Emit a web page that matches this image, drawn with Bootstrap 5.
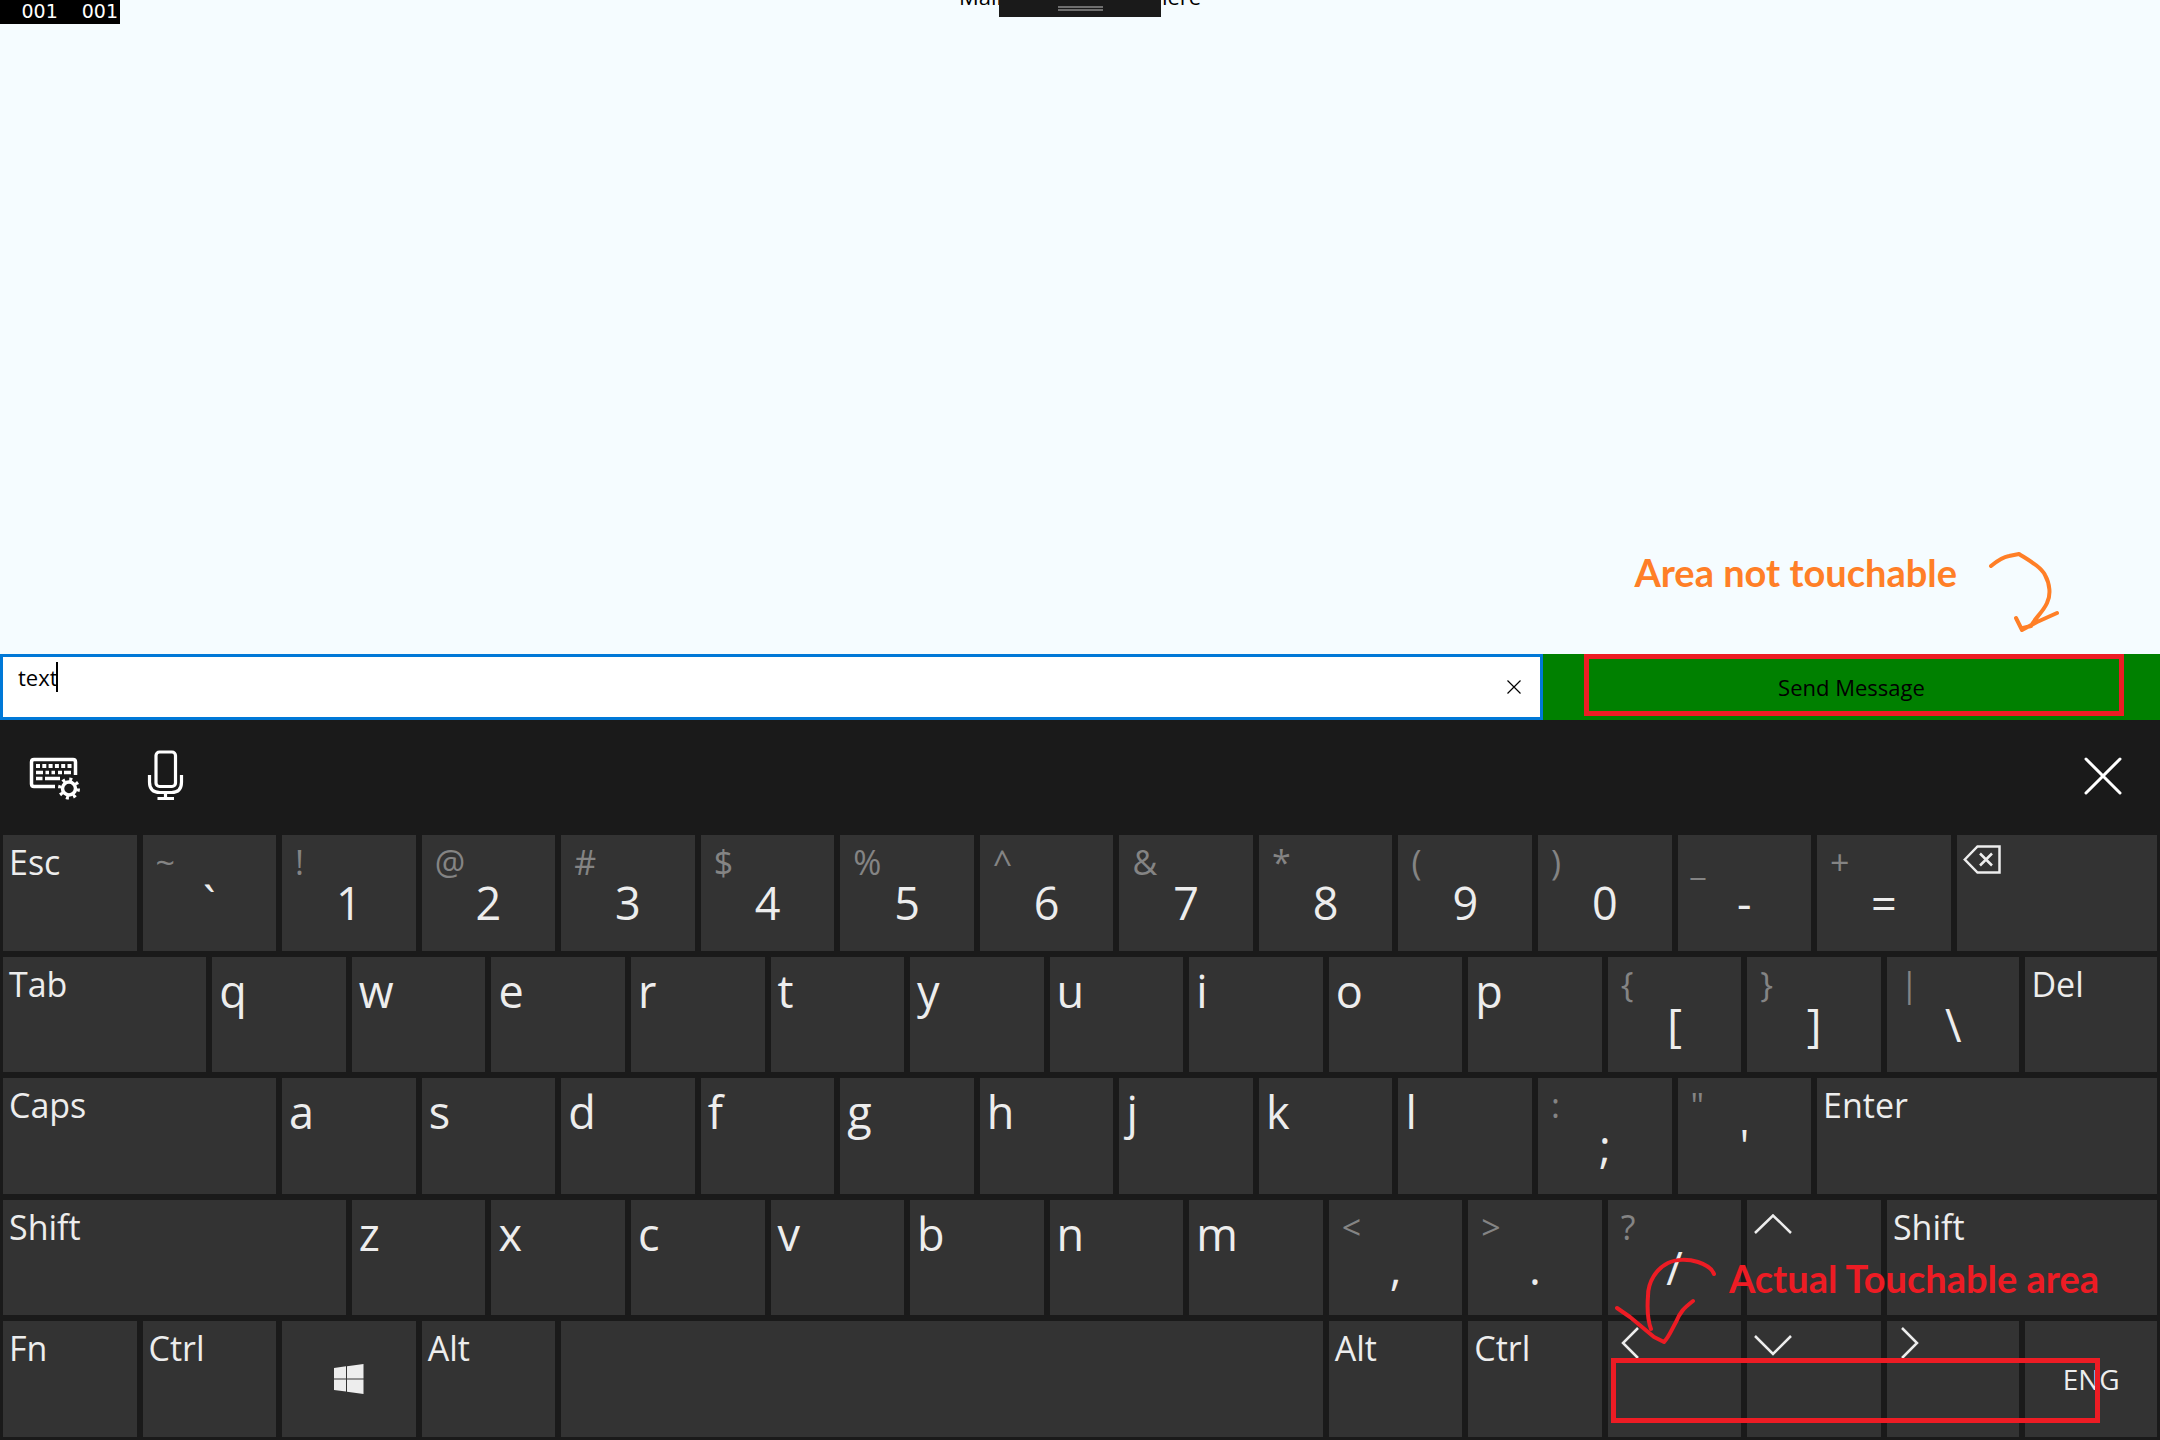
<!DOCTYPE html>
<html lang="en">
<head>
<meta charset="utf-8">
<meta name="viewport" content="width=device-width, initial-scale=1">
<title>Send Message</title>
<link href="https://cdn.jsdelivr.net/npm/bootstrap@5.3.0/dist/css/bootstrap.min.css" rel="stylesheet">
<style>
  body { background: #f5fcff; color: #000; font-family: "Open Sans", "Noto Sans", sans-serif; font-size: 22px; line-height: 30px; }
  svg { display: block; fill: none; }
  .bare-btn { border: 0; padding: 0; background: transparent; color: inherit; }
  .app-pane { height: 50vh; }
  .frame-stats { width: 120px; height: 24px; padding: 0 2px 2px 0; background: #000; color: #fff; font: 19px/22px "DejaVu Sans", sans-serif; }
  .page-heading { margin-top: -19px; }
  .snap-handle { width: 162px; height: 17px; padding-top: 6px; gap: 1px; background: #1a1a1a; }
  .snap-handle i { width: 45px; height: 2px; background: #6e6e6e; }

  .note-text { font: 700 38px/40px Lato, sans-serif; white-space: nowrap; }
  .note-orange { color: #ff7f27; }
  .note-red { color: #ed1c24; }
  .note-row { gap: 30px; padding: 0 98px 22px 0; }
  .note-box { border: 5px solid #ed1c24; pointer-events: none; }

  .composer { height: 66px; }
  .message-cell { flex: 5 1 0; }
  .send-cell { flex: 2 1 0; }
  .message-input { border: 3px solid #0078d7; padding: 4px 60px 24px 15px; background: #fff; color: #000; outline: 0; }
  .text-caret { left: 56px; top: 8px; width: 2px; height: 30px; background: #000; }
  .clear-btn { right: 22px; top: 26px; }
  .send-btn { background: #008000; color: #000; }
  .send-box { inset: 0 36px 4px 41px; }

  .touch-keyboard { height: 50vh; background: #1a1a1a; color: #ededed; }
  .kb-tools { flex: 0 0 115px; padding: 0 38px 3px 29px; }
  .kb-keys { display: grid; gap: 6px; padding: 0 3px 3px; grid-template-columns: repeat(28, minmax(0, 64fr)) repeat(3, minmax(0, 63fr)); grid-template-rows: repeat(5, minmax(0, 1fr)); }
  .kb-key { grid-column: span 2; display: flex; flex-direction: column; align-items: flex-start; justify-content: flex-start; min-width: 0; padding: 0 6px; border: 0; background: #333; color: #ededed; font-size: 34px; line-height: 54px; }
  .kb-key.letter { padding: 0 7px; font-size: 45px; line-height: 68px; }
  .kb-key .alt-char { padding-left: 7px; color: #848484; }
  .kb-key .main-char { align-self: center; font-size: 45px; line-height: 28px; }
  .kb-key.centered { align-items: center; justify-content: center; font-size: 28px; }
  .span-3 { grid-column: span 3; }
  .span-4 { grid-column: span 4; }
  .span-5 { grid-column: span 5; }
  .span-11 { grid-column: span 11; }
  .glyph-back { padding-top: 10px; }
  .glyph-v { padding: 14px 7px 0; }
  .glyph-h { padding: 6px 0 0 8px; }

  .touch-box { right: 60px; bottom: 17px; width: 489px; height: 65px; }
  .touch-arrow { right: 442px; bottom: 94px; pointer-events: none; }
  .touch-note { right: 61px; bottom: 142px; pointer-events: none; }
</style>
<script src="https://cdn.jsdelivr.net/npm/bootstrap@5.3.0/dist/js/bootstrap.bundle.min.js"></script>
</head>
<body>

<main class="app-pane d-flex flex-column position-relative overflow-hidden">
  <div class="frame-stats position-absolute top-0 start-0 d-flex justify-content-end gap-4"><span>001</span><span>001</span></div>
  <div class="page-heading text-center">Main content goes here</div>
  <div class="snap-handle position-absolute top-0 start-50 translate-middle-x d-flex flex-column align-items-center"><i></i><i></i></div>

  <div class="note-row mt-auto d-flex justify-content-end align-items-start">
    <span class="note-text note-orange">Area not touchable</span>
    <svg width="75" height="80" viewBox="0 0 75 80" stroke="#ff7f27" stroke-width="4" stroke-linecap="round" stroke-linejoin="round" aria-hidden="true">
      <path d="M4 14C10 9 16 5 22 4L32 2C43 9 54 15 58 23C63 32 64 43 60 51C56 60 48 66 44 74L36 76M29 66L35 78L50 70L70 61"/>
    </svg>
  </div>

  <form class="composer d-flex flex-shrink-0" onsubmit="return false">
    <div class="message-cell position-relative">
      <input class="message-input w-100 h-100 d-block" type="text" value="text" aria-label="Message">
      <span class="text-caret position-absolute"></span>
      <button class="bare-btn clear-btn position-absolute text-black" type="button" aria-label="Clear text">
        <svg width="14" height="14" viewBox="0 0 14 14" stroke="currentColor" stroke-width="1.2"><path d="M.5 .5L13.5 13.5M13.5 .5L.5 13.5"/></svg>
      </button>
    </div>
    <div class="send-cell position-relative">
      <button class="bare-btn send-btn w-100 h-100" type="submit">Send Message</button>
      <div class="note-box send-box position-absolute"></div>
    </div>
  </form>
</main>

<section class="touch-keyboard d-flex flex-column position-relative" aria-label="Touch keyboard">
  <div class="kb-tools d-flex align-items-center">
    <button class="bare-btn text-white" type="button" aria-label="Keyboard settings">
      <svg width="52" height="52" viewBox="0 0 52 52" stroke="currentColor">
        <path d="M26 36.500H5Q2.500 36.500 2.500 34V12Q2.500 9.500 5 9.500H44Q46.500 9.500 46.500 12V25" stroke-width="3.500"/>
        <path d="M7 16H43" stroke-width="4" stroke-dasharray="4 2.300"/>
        <path d="M7 22.500H14M16.500 22.500H20M22.500 22.500H26M29 22.500H33M35 22.500H42M7 28.500H13.500M16 28.500H31" stroke-width="3.500"/>
        <circle cx="40" cy="38.500" r="6.500" stroke-width="3.500"/>
        <circle cx="40" cy="38.500" r="9.300" stroke-width="3.400" stroke-dasharray="3 4.304"/>
      </svg>
    </button>
    <button class="bare-btn text-white ms-5" type="button" aria-label="Dictate">
      <svg width="76" height="52" viewBox="0 0 76 52" stroke="currentColor" stroke-width="3.200">
        <rect x="27" y="2" width="19.500" height="34.500" rx="3.500"/>
        <path d="M20.500 25V32Q20.500 42.500 31 42.500H42.500Q52.500 42.500 52.500 32V25M36.500 42.500V48M28.500 48.500H45"/>
      </svg>
    </button>
    <button class="bare-btn text-white ms-auto" type="button" aria-label="Close keyboard">
      <svg width="38" height="38" viewBox="0 0 38 38" stroke="currentColor" stroke-width="3" stroke-linecap="round"><path d="M2 2L36 36M36 2L2 36"/></svg>
    </button>
  </div>

  <div class="kb-keys flex-fill">
    <button class="kb-key" type="button">Esc</button>
    <button class="kb-key" type="button"><span class="alt-char">~</span><span class="main-char">`</span></button>
    <button class="kb-key" type="button"><span class="alt-char">!</span><span class="main-char">1</span></button>
    <button class="kb-key" type="button"><span class="alt-char">@</span><span class="main-char">2</span></button>
    <button class="kb-key" type="button"><span class="alt-char">#</span><span class="main-char">3</span></button>
    <button class="kb-key" type="button"><span class="alt-char">$</span><span class="main-char">4</span></button>
    <button class="kb-key" type="button"><span class="alt-char">%</span><span class="main-char">5</span></button>
    <button class="kb-key" type="button"><span class="alt-char">^</span><span class="main-char">6</span></button>
    <button class="kb-key" type="button"><span class="alt-char">&amp;</span><span class="main-char">7</span></button>
    <button class="kb-key" type="button"><span class="alt-char">*</span><span class="main-char">8</span></button>
    <button class="kb-key" type="button"><span class="alt-char">(</span><span class="main-char">9</span></button>
    <button class="kb-key" type="button"><span class="alt-char">)</span><span class="main-char">0</span></button>
    <button class="kb-key" type="button"><span class="alt-char">_</span><span class="main-char">-</span></button>
    <button class="kb-key" type="button"><span class="alt-char">+</span><span class="main-char">=</span></button>
    <button class="kb-key span-3 glyph-back" type="button" aria-label="Backspace">
      <svg width="38" height="29" viewBox="0 0 38 29" stroke="currentColor" stroke-width="2.500"><path d="M1.800 14.500L14.500 1.500H36.500V27.500H14.500ZM17 8.500L29 20.500M29 8.500L17 20.500"/></svg>
    </button>

    <button class="kb-key span-3" type="button">Tab</button>
    <button class="kb-key letter" type="button">q</button>
    <button class="kb-key letter" type="button">w</button>
    <button class="kb-key letter" type="button">e</button>
    <button class="kb-key letter" type="button">r</button>
    <button class="kb-key letter" type="button">t</button>
    <button class="kb-key letter" type="button">y</button>
    <button class="kb-key letter" type="button">u</button>
    <button class="kb-key letter" type="button">i</button>
    <button class="kb-key letter" type="button">o</button>
    <button class="kb-key letter" type="button">p</button>
    <button class="kb-key" type="button"><span class="alt-char">{</span><span class="main-char">[</span></button>
    <button class="kb-key" type="button"><span class="alt-char">}</span><span class="main-char">]</span></button>
    <button class="kb-key" type="button"><span class="alt-char">|</span><span class="main-char">\</span></button>
    <button class="kb-key" type="button">Del</button>

    <button class="kb-key span-4" type="button">Caps</button>
    <button class="kb-key letter" type="button">a</button>
    <button class="kb-key letter" type="button">s</button>
    <button class="kb-key letter" type="button">d</button>
    <button class="kb-key letter" type="button">f</button>
    <button class="kb-key letter" type="button">g</button>
    <button class="kb-key letter" type="button">h</button>
    <button class="kb-key letter" type="button">j</button>
    <button class="kb-key letter" type="button">k</button>
    <button class="kb-key letter" type="button">l</button>
    <button class="kb-key" type="button"><span class="alt-char">:</span><span class="main-char">;</span></button>
    <button class="kb-key" type="button"><span class="alt-char">"</span><span class="main-char">'</span></button>
    <button class="kb-key span-5" type="button">Enter</button>

    <button class="kb-key span-5" type="button">Shift</button>
    <button class="kb-key letter" type="button">z</button>
    <button class="kb-key letter" type="button">x</button>
    <button class="kb-key letter" type="button">c</button>
    <button class="kb-key letter" type="button">v</button>
    <button class="kb-key letter" type="button">b</button>
    <button class="kb-key letter" type="button">n</button>
    <button class="kb-key letter" type="button">m</button>
    <button class="kb-key" type="button"><span class="alt-char">&lt;</span><span class="main-char">,</span></button>
    <button class="kb-key" type="button"><span class="alt-char">&gt;</span><span class="main-char">.</span></button>
    <button class="kb-key" type="button"><span class="alt-char">?</span><span class="main-char">/</span></button>
    <button class="kb-key glyph-v" type="button" aria-label="Up">
      <svg width="38" height="21" viewBox="0 0 38 21" stroke="currentColor" stroke-width="2.500"><path d="M1 19L19 1.500L37 19"/></svg>
    </button>
    <button class="kb-key span-4" type="button">Shift</button>

    <button class="kb-key" type="button">Fn</button>
    <button class="kb-key" type="button">Ctrl</button>
    <button class="kb-key centered" type="button" aria-label="Windows">
      <svg width="30" height="30" viewBox="0 0 30 30"><path fill="currentColor" d="M0 4L12 2.300V14.500H0ZM13 2.200L29.500 0V14.500H13ZM0 15.500H12V27.500L0 26ZM13 15.500H29.500V30L13 27.700Z"/></svg>
    </button>
    <button class="kb-key" type="button">Alt</button>
    <button class="kb-key span-11" type="button" aria-label="Space"></button>
    <button class="kb-key" type="button">Alt</button>
    <button class="kb-key" type="button">Ctrl</button>
    <button class="kb-key glyph-h" type="button" aria-label="Left">
      <svg class="ms-1" width="20" height="32" viewBox="0 0 20 32" stroke="currentColor" stroke-width="2.500"><path d="M18 1L3 16L18 31"/></svg>
    </button>
    <button class="kb-key glyph-v" type="button" aria-label="Down">
      <svg width="38" height="21" viewBox="0 0 38 21" stroke="currentColor" stroke-width="2.500"><path d="M1 1L19 19L37 1"/></svg>
    </button>
    <button class="kb-key glyph-h" type="button" aria-label="Right">
      <svg class="ms-1" width="20" height="32" viewBox="0 0 20 32" stroke="currentColor" stroke-width="2.500"><path d="M3 1L18 16L3 31"/></svg>
    </button>
    <button class="kb-key centered" type="button">ENG</button>
  </div>

  <svg class="touch-arrow position-absolute" width="104" height="90" viewBox="1614 1256 104 90" stroke="#ed1c24" stroke-width="4" stroke-linecap="round" stroke-linejoin="round" aria-hidden="true">
    <path d="M1714 1274C1712 1268 1707 1265 1698 1262C1688 1259 1676 1259 1668 1263C1656 1269 1648 1282 1648 1296C1647 1309 1648 1321 1651 1329M1617 1308L1630 1317L1654 1337L1664 1342C1669 1337 1672 1329 1676 1322C1680 1312 1684 1308 1693 1301"/>
  </svg>
  <div class="touch-note note-text note-red position-absolute">Actual Touchable area</div>
  <div class="note-box touch-box position-absolute"></div>
</section>

</body>
</html>
